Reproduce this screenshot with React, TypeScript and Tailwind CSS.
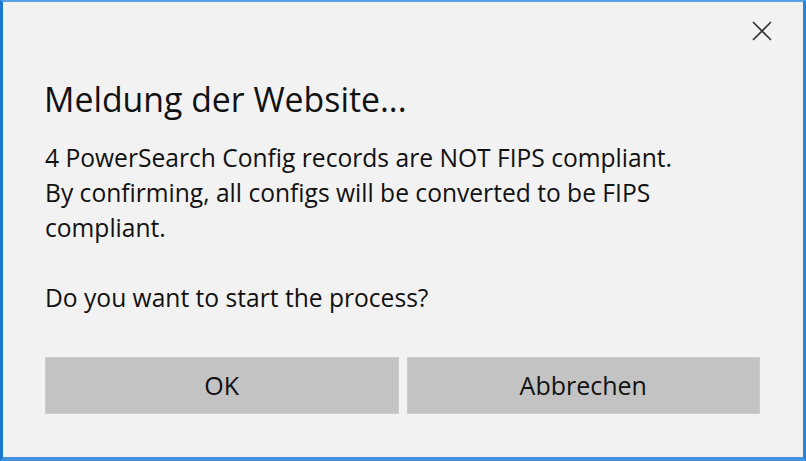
import React from "react";

export default function App() {
  return (
    <div
      className="w-[806px] h-[461px] bg-[#f2f2f2] border-l-[3px] border-r-[3px] border-t-[2px] border-b-[4px] border-l-[#1a78d0] border-r-[#2a84d8] border-t-[#5aa0e4] border-b-[#4193e0] flex flex-col text-[#111]"
      style={{ fontFamily: '"Open Sans", "Noto Sans", sans-serif' }}
    >
      <div className="flex justify-end pt-[18px] pr-[30px] h-[60px]">
        <svg width="22" height="22" viewBox="0 0 22 22" className="block">
          <path d="M2 2 L20 20 M20 2 L2 20" stroke="#333" strokeWidth="1.6" fill="none" />
        </svg>
      </div>
      <div className="pl-[41px] text-[33.8px] leading-[40px] mt-[17px]">Meldung der Website...</div>
      <div className="pl-[42px] text-[24.6px] leading-[35px] mt-[21px]">
        <div>4 PowerSearch Config records are NOT FIPS compliant.</div>
        <div>
          By confirming, all configs will be converted to be FIPS
          <br />
          compliant.
        </div>
        <div className="h-[35px]" />
        <div>Do you want to start the process?</div>
      </div>
      <div className="flex gap-[8px] pl-[42px] pr-[43px] mt-[42px]">
        <div className="flex-1 h-[57px] bg-[#c3c3c3] border border-[#cccccc] flex items-center justify-center text-[25px]">
          OK
        </div>
        <div className="flex-1 h-[57px] bg-[#c3c3c3] border border-[#cccccc] flex items-center justify-center text-[25px]">
          Abbrechen
        </div>
      </div>
    </div>
  );
}
